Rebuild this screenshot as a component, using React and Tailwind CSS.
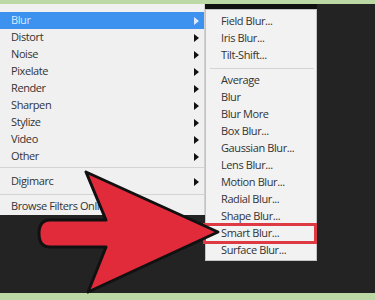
import React from "react";

const font = { fontFamily: '"Open Sans", "Noto Sans", sans-serif' };

function Caret({ light }) {
  return (
    <svg width="5" height="8" viewBox="0 0 5 8" className="shrink-0">
      <path d="M0 0 L5 4 L0 8 Z" fill={light ? "#dbeaff" : "#111"} />
    </svg>
  );
}

function MainRow({ label, active, arrow = true }) {
  return (
    <div
      className={
        "h-[17px] flex items-center justify-between pl-[11px] pr-[5px] text-[11px] tracking-[-0.4px] " +
        (active ? "bg-[#3c92ee] text-[#d8e9ff]" : "text-[#333]")
      }
    >
      <span>{label}</span>
      {arrow && <Caret light={active} />}
    </div>
  );
}

function SubRow({ label }) {
  return (
    <div className="h-[17px] flex items-center pl-[15px] text-[11px] tracking-[-0.4px] text-[#333]">
      {label}
    </div>
  );
}

export default function App() {
  const top = ["Blur", "Distort", "Noise", "Pixelate", "Render", "Sharpen", "Stylize", "Video", "Other"];
  const sub1 = ["Field Blur...", "Iris Blur...", "Tilt-Shift..."];
  const sub2 = ["Average", "Blur", "Blur More", "Box Blur...", "Gaussian Blur...", "Lens Blur...", "Motion Blur...", "Radial Blur...", "Shape Blur..."];
  return (
    <div className="relative w-[375px] h-[300px] overflow-hidden bg-[#232323] flex flex-col" style={font}>
      <div className="h-[4px] bg-[#bcd8a4] shrink-0" />
      <div className="flex-1 flex">
        {/* main menu */}
        <div className="w-[205px] flex flex-col">
          <div className="bg-[#f0f0f0] pt-[8px] border-r border-[#d0d0d0]">
            {top.map((t, i) => (
              <MainRow key={t} label={t} active={i === 0} />
            ))}
            <div className="h-[8px] flex items-start pt-[2px]">
              <div className="h-px w-full bg-[#d4d4d4]" />
            </div>
            <MainRow label="Digimarc" />
            <div className="h-[8px] flex items-center">
              <div className="h-px w-full bg-[#d4d4d4]" />
            </div>
            <MainRow label="Browse Filters Online" arrow={false} />
          </div>
        </div>
        {/* submenu column */}
        <div className="w-[112px] flex flex-col">
          <div className="h-[5px] bg-[#111]" />
          <div className="bg-[#f2f2f2] border border-[#c4c4c4] pt-[3px] pb-[1px]">
            {sub1.map((t) => (
              <SubRow key={t} label={t} />
            ))}
            <div className="h-[8px] flex items-center pl-[4px] pr-[2px]">
              <div className="h-px w-full bg-[#d4d4d4]" />
            </div>
            {sub2.map((t) => (
              <SubRow key={t} label={t} />
            ))}
            <div className="relative">
              <SubRow label="Smart Blur..." />
              <span className="absolute left-[-3px] right-[-1px] top-[-2px] bottom-[-2px] border-[3px] border-[#de3a44]" />
            </div>
            <SubRow label="Surface Blur..." />
          </div>
        </div>
        <div className="flex-1" />
      </div>
      <div className="h-[7px] bg-[#bcd8a4] shrink-0" />
      <svg className="absolute left-0 top-0 pointer-events-none" width="375" height="300" viewBox="0 0 375 300">
        <path
          d="M50 220 L106 220 L86 172 L218 232 L88 292 L106 247 L50 247 Q39 247 39 233.5 Q39 220 50 220 Z"
          fill="#e12a3a"
          stroke="#111"
          strokeWidth="3"
          strokeLinejoin="round"
        />
      </svg>
    </div>
  );
}
